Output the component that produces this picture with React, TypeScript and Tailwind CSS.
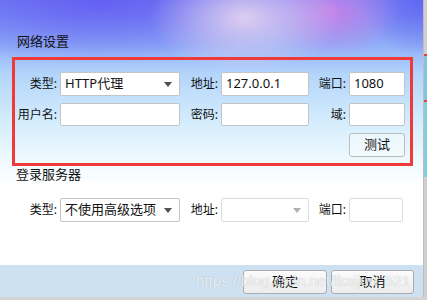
import React from "react";

const font = "font-['Noto_Sans','Noto_Sans_CJK_SC',sans-serif]";

function Label({ children }: { children: React.ReactNode }) {
  return (
    <div className="flex items-center justify-end pr-[3px] text-[12px] leading-none text-[#111]">
      {children}
    </div>
  );
}

function Input({ value, light }: { value?: string; light?: boolean }) {
  return (
    <div
      className={
        "h-full flex items-center px-[4px] bg-white rounded-[2px] border text-[13px] text-[#111] " +
        (light ? "border-[#dcdcdc]" : "border-[#c4c4c4]")
      }
    >
      {value}
    </div>
  );
}

function Select({ value, disabled }: { value?: string; disabled?: boolean }) {
  return (
    <div
      className={
        "h-full flex items-center justify-between pl-[4px] pr-[7px] bg-white rounded-[2px] border text-[13px] text-[#111] " +
        (disabled ? "border-[#dcdcdc]" : "border-[#c4c4c4]")
      }
    >
      <span>{value}</span>
      <svg width="8" height="5" viewBox="0 0 8 5">
        <polygon points="0,0 8,0 4,5" fill={disabled ? "#b0b0b0" : "#505050"} />
      </svg>
    </div>
  );
}

function Btn({ children, w }: { children: React.ReactNode; w: string }) {
  return (
    <div
      className={
        w +
        " h-[24px] flex items-center justify-center rounded-[3px] border border-[#adadad] bg-[linear-gradient(180deg,#fbfbfb,#ececec)] text-[13px] text-[#111]"
      }
    >
      {children}
    </div>
  );
}

export default function App() {
  return (
    <div className={"w-[427px] h-[300px] flex bg-[#d4d4d4] overflow-hidden relative " + font}>
      <div className="w-[424px] h-[297px] flex flex-col border-r border-[#bdbdbd] bg-[radial-gradient(ellipse_95px_55px_at_245px_18px,rgba(222,205,240,1),rgba(222,205,240,0)_100%),radial-gradient(ellipse_70px_45px_at_330px_12px,rgba(200,130,232,0.95),rgba(200,130,232,0)_100%),radial-gradient(ellipse_60px_55px_at_420px_0px,rgba(95,100,242,0.9),rgba(95,100,242,0)_100%),radial-gradient(ellipse_200px_65px_at_100px_0px,rgba(98,92,242,0.9),rgba(98,92,242,0)_100%),linear-gradient(180deg,#7583f3_0px,#90aff7_45px,#b4d6fb_75px,#d3ecfd_120px,#eef9fe_160px,#ffffff_185px)]">
        <div className="h-[57px] pl-[17px] pt-[32px] text-[13px] leading-[18px] text-[#111]">网络设置</div>
        <div className="ml-[12px] w-[401px] h-[109px] border-[3px] border-[#f03a3a] pt-[12px]">
          <div className="grid grid-cols-[45px_120px_41px_88px_40px_56px] grid-rows-[24px_23px_24px] gap-y-[7px]">
            <Label>类型:</Label>
            <Select value="HTTP代理" />
            <Label>地址:</Label>
            <Input value="127.0.0.1" />
            <Label>端口:</Label>
            <Input value="1080" />

            <Label>用户名:</Label>
            <Input />
            <Label>密码:</Label>
            <Input />
            <Label>域:</Label>
            <Input />

            <div className="col-span-5" />
            <div className="h-full flex items-center justify-center rounded-[3px] border border-[#bdbdbd] bg-white/40 text-[13px] text-[#111]">
              测试
            </div>
          </div>
        </div>
        <div className="h-[32px] pl-[16px] pt-[1px] text-[13px] leading-[14px] text-[#111]">登录服务器</div>
        <div className="pl-[15px] grid grid-cols-[45px_120px_41px_88px_40px_54px] h-[24px]">
          <Label>类型:</Label>
          <Select value="不使用高级选项" />
          <Label>地址:</Label>
          <Select disabled />
          <Label>端口:</Label>
          <Input light />
        </div>
        <div className="flex-1" />
        <div className="h-[32px] bg-[#cde1f2] flex justify-end items-start pt-[5px] pr-[9px] gap-[4px]">
          <Btn w="w-[84px]">确定</Btn>
          <Btn w="w-[83px]">取消</Btn>
        </div>
      </div>
      <div className="w-[3px] h-[297px] flex flex-col">
        <div className="h-[54px] bg-[#d0d0d0]" />
        <div className="h-[2px] bg-[#e84040]" />
        <div className="h-[44px] bg-[#7fc4e0]" />
        <div className="h-[2px] bg-[#e84040]" />
        <div className="h-[75px] bg-[#7fd0dc]" />
        <div className="flex-1 bg-[#d0d0d0]" />
      </div>
      <div className="absolute left-[196px] top-[271px] text-[15px] leading-[20px] font-['Liberation_Sans',sans-serif] text-white/75 [text-shadow:0_0_1px_rgba(120,130,140,0.5)] pointer-events-none whitespace-nowrap">
        https://blog.csdn.net/lkaijun_521
      </div>
    </div>
  );
}
